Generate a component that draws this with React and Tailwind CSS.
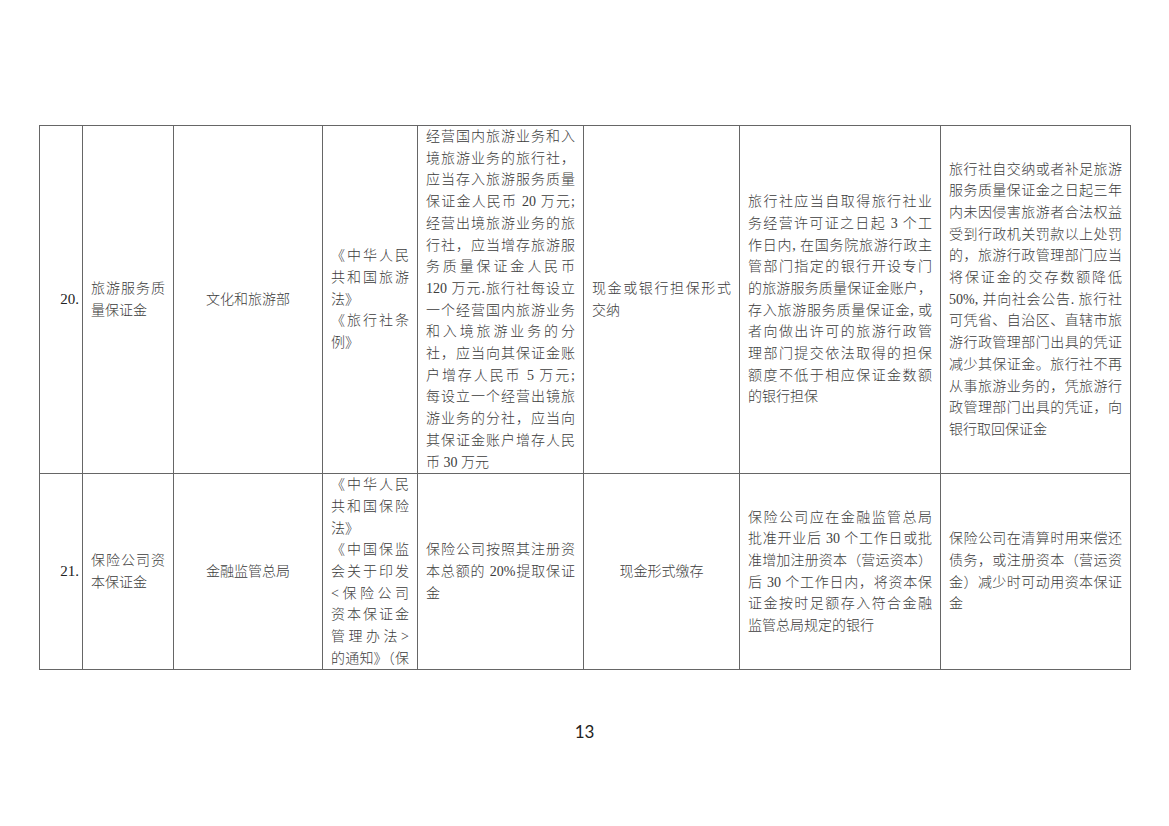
import React from 'react';

// 每个单元格：段落数组，段落内为手动断好的行
const rows = [
  {
    num: '20.',
    height: 'h-[348px]',
    name: [['旅游服务质', '量保证金']],
    dept: '文化和旅游部',
    law: [
      ['《中华人民', '共和国旅游', '法》'],
      ['《旅行社条', '例》'],
    ],
    amount: [
      [
        '经营国内旅游业务和入',
        '境旅游业务的旅行社，',
        '应当存入旅游服务质量',
        '保证金人民币 20 万元;',
        '经营出境旅游业务的旅',
        '行社，应当增存旅游服',
        '务质量保证金人民币',
        '120 万元.旅行社每设立',
        '一个经营国内旅游业务',
        '和入境旅游业务的分',
        '社，应当向其保证金账',
        '户增存人民币 5 万元;',
        '每设立一个经营出镜旅',
        '游业务的分社，应当向',
        '其保证金账户增存人民',
        '币 30 万元',
      ],
    ],
    method: [['现金或银行担保形式', '交纳']],
    methodCenter: false,
    deposit: [
      [
        '旅行社应当自取得旅行社业',
        '务经营许可证之日起 3 个工',
        '作日内, 在国务院旅游行政主',
        '管部门指定的银行开设专门',
        '的旅游服务质量保证金账户，',
        '存入旅游服务质量保证金, 或',
        '者向做出许可的旅游行政管',
        '理部门提交依法取得的担保',
        '额度不低于相应保证金数额',
        '的银行担保',
      ],
    ],
    refund: [
      [
        '旅行社自交纳或者补足旅游',
        '服务质量保证金之日起三年',
        '内未因侵害旅游者合法权益',
        '受到行政机关罚款以上处罚',
        '的，旅游行政管理部门应当',
        '将保证金的交存数额降低',
        '50%, 并向社会公告. 旅行社',
        '可凭省、自治区、直辖市旅',
        '游行政管理部门出具的凭证',
        '减少其保证金。旅行社不再',
        '从事旅游业务的，凭旅游行',
        '政管理部门出具的凭证，向',
        '银行取回保证金',
      ],
    ],
  },
  {
    num: '21.',
    height: 'h-[195px]',
    name: [['保险公司资', '本保证金']],
    dept: '金融监管总局',
    law: [
      ['《中华人民', '共和国保险', '法》'],
      ['《中国保监', '会关于印发', '<保险公司', '资本保证金', '管理办法>', '的通知》（保', ''],
    ],
    amount: [['保险公司按照其注册资', '本总额的 20%提取保证', '金']],
    method: [['现金形式缴存']],
    methodCenter: true,
    deposit: [
      [
        '保险公司应在金融监管总局',
        '批准开业后 30 个工作日或批',
        '准增加注册资本（营运资本）',
        '后 30 个工作日内，将资本保',
        '证金按时足额存入符合金融',
        '监管总局规定的银行',
      ],
    ],
    refund: [
      [
        '保险公司在清算时用来偿还',
        '债务，或注册资本（营运资',
        '金）减少时可动用资本保证',
        '金',
      ],
    ],
  },
];

function Lines({ paras }) {
  return (
    <div>
      {paras.map((p, pi) =>
        p.map((line, li) => {
          if (line === '') return null;
          const last = li === p.length - 1;
          return (
            <div
              key={pi + '-' + li}
              className={last ? 'text-left' : 'text-justify [text-align-last:justify]'}
            >
              {line}
            </div>
          );
        })
      )}
    </div>
  );
}

export default function App() {
  const cell = 'border border-[#666] align-middle px-2 py-0';
  return (
    <div className="min-h-screen bg-white pt-[125px] pl-[39px] text-[#3c3c3c] font-['Liberation_Serif','Noto_Sans_CJK_SC',serif] font-light text-[14px] leading-[21.7px]">
      <table className="border-collapse table-fixed w-[1091px] border border-[#333]">
        <colgroup>
          <col className="w-[43px]" />
          <col className="w-[91px]" />
          <col className="w-[149px]" />
          <col className="w-[95px]" />
          <col className="w-[166px]" />
          <col className="w-[156px]" />
          <col className="w-[201px]" />
          <col className="w-[190px]" />
        </colgroup>
        <tbody>
          {rows.map((r) => (
            <tr key={r.num} className={r.height + ' border-y border-[#333]'}>
              <td className="border border-[#666] align-middle text-right pr-[3px] pl-0 text-[15px] text-[#222]">
                {r.num}
              </td>
              <td className={cell}>
                <Lines paras={r.name} />
              </td>
              <td className={cell + ' text-center'}>{r.dept}</td>
              <td className={cell + ' overflow-hidden'}>
                <div className={r.num === '21.' ? 'h-[195px] overflow-hidden' : ''}>
                  <Lines paras={r.law} />
                </div>
              </td>
              <td className={cell}>
                <Lines paras={r.amount} />
              </td>
              <td className={cell + (r.methodCenter ? ' text-center' : '')}>
                {r.methodCenter ? r.method[0][0] : <Lines paras={r.method} />}
              </td>
              <td className={cell}>
                <Lines paras={r.deposit} />
              </td>
              <td className={cell}>
                <Lines paras={r.refund} />
              </td>
            </tr>
          ))}
        </tbody>
      </table>
      <div className="w-[1091px] mt-[52px] text-center font-['Lato','Liberation_Sans',sans-serif] font-normal text-[17px] leading-[20px] text-[#222]">
        13
      </div>
    </div>
  );
}
